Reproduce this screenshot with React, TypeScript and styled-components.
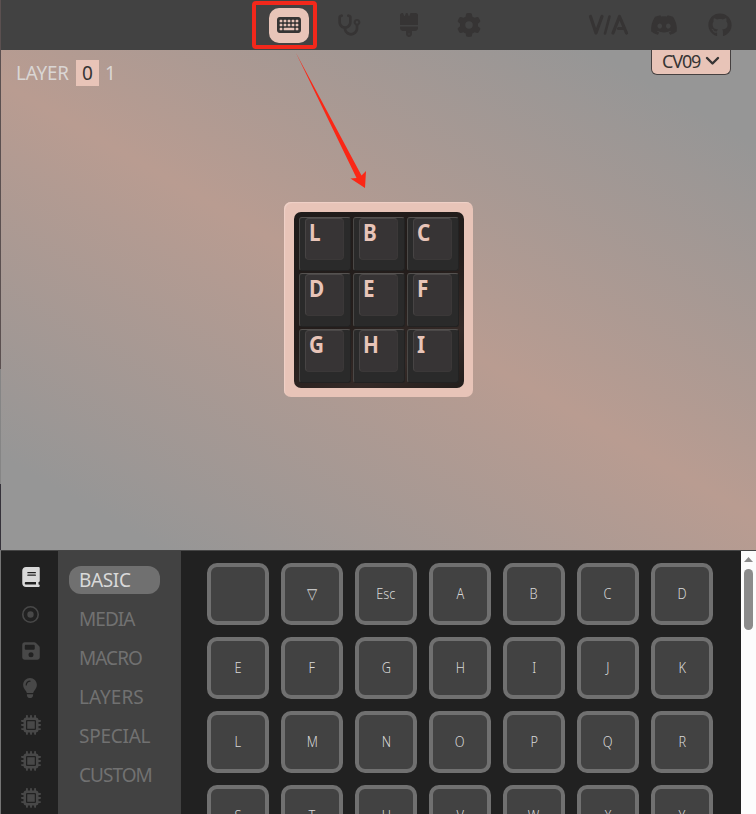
import React from 'react';
import styled, { createGlobalStyle } from 'styled-components';
import {
  FaKeyboard,
  FaStethoscope,
  FaBrush,
  FaGear,
  FaDiscord,
  FaGithub,
  FaBook,
  FaRegCircleDot,
  FaFloppyDisk,
  FaLightbulb,
  FaMicrochip,
} from 'react-icons/fa6';

const GlobalStyle = createGlobalStyle`
  * { box-sizing: border-box; }
  body {
    margin: 0;
    overflow: hidden;
    font-family: "Noto Sans", sans-serif;
  }
`;

const Window = styled.div`
  position: relative;
  width: 756px;
  height: 814px;
  overflow: hidden;
  display: flex;
  flex-direction: column;
  padding-left: 1px;
  background: linear-gradient(
    #5b5050 0 369px,
    #858585 369px 484px,
    #35323a 484px 550px,
    #757575 550px
  );
`;

const TopBar = styled.header`
  flex: none;
  height: 50px;
  display: grid;
  grid-template-columns: 258px 1fr 168px;
  background: #424242;
  color: #363434;
`;

const Nav = styled.nav`
  grid-column: 2;
  display: flex;
  align-items: center;
`;

const NavItem = styled.div<{ $active?: boolean }>`
  display: flex;
  align-items: center;
  justify-content: center;
  width: 40px;
  height: 35px;
  margin: 0 10px;
  border-radius: 10px;
  background: ${(p) => (p.$active ? '#e8c4b8' : 'transparent')};
  svg { display: block; height: 24px; width: auto; }
`;

const Links = styled.div`
  display: flex;
  align-items: center;
  svg { display: block; flex: none; }
  svg + svg { margin-left: 21px; }
  svg:last-child { margin-left: 30px; }
`;

const Canvas = styled.main`
  flex: none;
  height: 501px;
  display: flex;
  flex-direction: column;
  align-items: center;
  background: linear-gradient(30deg, #969696 10%, #b99c91 50%, #969696 90%);
  border-bottom: 1px solid #454545;
`;

const CanvasHeader = styled.div`
  align-self: stretch;
  display: flex;
  justify-content: space-between;
  align-items: flex-start;
  height: 152px;
  padding: 0 25px 0 15px;
`;

const Layers = styled.div`
  display: flex;
  align-items: center;
  margin-top: 10px;
  height: 26px;
  font-size: 19px;
  color: #dad6d4;
`;

const LayerLabel = styled.span`
  width: 60px;
  white-space: nowrap;
  letter-spacing: -0.15px;
  transform: scaleX(0.99);
  transform-origin: left;
`;

const Layer = styled.span<{ $active?: boolean }>`
  width: 23px;
  height: 26px;
  line-height: 26px;
  text-align: center;
  color: ${(p) => (p.$active ? '#363434' : 'inherit')};
  background: ${(p) => (p.$active ? '#e8c4b8' : 'transparent')};
`;

const DeviceBadge = styled.div`
  display: flex;
  align-items: center;
  gap: 5px;
  width: 80px;
  height: 25px;
  padding: 0 0 2px 10px;
  font-size: 18px;
  letter-spacing: -1.15px;
  color: #363434;
  background: #e8c4b8;
  border: 1px solid #454040;
  border-top: none;
  border-radius: 0 0 6px 6px;
  svg { flex: none; }
`;

const Case = styled.div`
  flex: none;
  width: 189px;
  height: 195px;
  padding: 10px;
  border-radius: 7px;
  background: #e8c4b8;
  box-shadow: inset 1px 1px 1px #f0d2c8;
`;

const Plate = styled.div`
  width: 170px;
  height: 176px;
  padding: 4px 0 0 5px;
  display: grid;
  grid-template-columns: repeat(3, 54px);
  grid-template-rows: repeat(3, 56px);
  border-radius: 7px;
  background: linear-gradient(150deg, #1f1b1a, #241d1b 50%, #352a27 78%, #231e1c);
`;

const Switch = styled.div`
  width: 52px;
  height: 54px;
  margin-top: 1px;
  padding-left: 5px;
  border: 1px solid #222;
  border-top-color: #555250;
  border-left-color: #4a4846;
  border-radius: 3px;
  background: #2a2a2a;
`;

const Cap = styled.div`
  width: 39px;
  height: 42px;
  padding-left: 3px;
  border: 1px solid #3b3838;
  border-top-color: #4b4848;
  border-left-color: #474444;
  border-radius: 4px;
  background: #373435;
  color: #e8c4b8;
  font-weight: 700;
  font-size: 23px;
  line-height: 26px;
`;

const Legend = styled.span`
  display: inline-block;
  transform: scaleX(0.9);
  transform-origin: left;
`;

const Panel = styled.section`
  flex: 1;
  min-height: 0;
  display: flex;
`;

const Rail = styled.div`
  flex: none;
  width: 57px;
  padding-top: 8px;
  background: #212121;
`;

const RailItem = styled.div<{ $active?: boolean }>`
  display: flex;
  align-items: center;
  justify-content: center;
  height: 36.8px;
  padding-left: 2px;
  color: ${(p) => (p.$active ? '#d9d9d9' : '#484848')};
  svg { display: block; height: 20px; width: auto; }
  &:nth-child(2) svg { height: 17px; margin-right: 1px; }
  &:nth-child(4) svg { margin-right: 2px; }
`;

const Menu = styled.div`
  flex: none;
  width: 123px;
  padding: 15px 0 0 11px;
  background: #424242;
`;

const MenuItem = styled.div<{ $active?: boolean; $tracking: number }>`
  width: 91px;
  height: 28px;
  margin-bottom: 11px;
  padding-left: 10px;
  border-radius: 12px;
  line-height: 28px;
  font-size: 19px;
  letter-spacing: ${(p) => p.$tracking}px;
  white-space: nowrap;
  color: ${(p) => (p.$active ? '#d9d9d9' : '#717171')};
  background: ${(p) => (p.$active ? '#707070' : 'transparent')};
`;

const Keycodes = styled.div`
  flex: 1;
  overflow: hidden;
  padding: 12px 0 0 26px;
  display: grid;
  grid-template-columns: repeat(7, 62px);
  grid-auto-rows: 62px;
  gap: 12px;
  background: #212121;
`;

const Keycode = styled.div`
  display: flex;
  align-items: center;
  justify-content: center;
  padding-bottom: 2px;
  border: 4px solid #707070;
  border-radius: 10px;
  background: #424242;
  color: #d9d9d9;
  font-size: 14.5px;
  line-height: 18px;
  font-weight: 300;
`;

const KeyLabel = styled.span`
  transform: scaleX(0.88);
`;

const Scrollbar = styled.div`
  flex: none;
  width: 15px;
  padding-top: 6px;
  display: flex;
  flex-direction: column;
  align-items: center;
  gap: 7px;
  background: #fcfcfc;
`;

const Thumb = styled.div`
  width: 9px;
  height: 61px;
  border-radius: 5px;
  background: #8b8b8b;
`;

const Annotation = styled.svg`
  position: absolute;
  left: 251px;
  top: 0;
  pointer-events: none;
`;

const ViaLogo = () => (
  <svg width="41" height="22" viewBox="0 0 41 22" fill="none" stroke="currentColor" strokeWidth="3.2" strokeLinecap="round" strokeLinejoin="round">
    <path d="M2.500 2.500 8 19 14 2.500" />
    <path d="M21.500 2.500 17 19.500" strokeWidth="2.6" />
    <path d="M25 19 31.500 2.500 38.500 19M30.500 14.500H35.500" />
  </svg>
);

const Chevron = () => (
  <svg width="15" height="10" viewBox="0 0 15 10" fill="none" stroke="currentColor" strokeWidth="2.4" strokeLinecap="round" strokeLinejoin="round">
    <path d="M2 2 7.500 7.500 13 2" />
  </svg>
);

const SWITCHES = ['L', 'B', 'C', 'D', 'E', 'F', 'G', 'H', 'I'];
const MENU: [string, number][] = [
  ['BASIC', -0.35],
  ['MEDIA', -0.95],
  ['MACRO', -0.95],
  ['LAYERS', 0.05],
  ['SPECIAL', -0.25],
  ['CUSTOM', -0.95],
];
const KEYCODES = ['', '▽', 'Esc', ...'ABCDEFGHIJKLMNOPQRSTUVWXY'.split('')];
const RAIL = [FaBook, FaRegCircleDot, FaFloppyDisk, FaLightbulb, FaMicrochip, FaMicrochip, FaMicrochip];

export default function App() {
  return (
    <Window>
      <GlobalStyle />
      <TopBar>
        <Nav>
          <NavItem $active><FaKeyboard /></NavItem>
          <NavItem><FaStethoscope /></NavItem>
          <NavItem><FaBrush /></NavItem>
          <NavItem><FaGear /></NavItem>
        </Nav>
        <Links>
          <ViaLogo />
          <FaDiscord size={28} />
          <FaGithub size={24} />
        </Links>
      </TopBar>
      <Canvas>
        <CanvasHeader>
          <Layers>
            <LayerLabel>LAYER</LayerLabel>
            <Layer $active>0</Layer>
            <Layer>1</Layer>
          </Layers>
          <DeviceBadge>
            CV09
            <Chevron />
          </DeviceBadge>
        </CanvasHeader>
        <Case>
          <Plate>
            {SWITCHES.map((label) => (
              <Switch key={label}>
                <Cap><Legend>{label}</Legend></Cap>
              </Switch>
            ))}
          </Plate>
        </Case>
      </Canvas>
      <Panel>
        <Rail>
          {RAIL.map((Icon, i) => (
            <RailItem key={i} $active={i === 0}><Icon /></RailItem>
          ))}
        </Rail>
        <Menu>
          {MENU.map(([label, tracking], i) => (
            <MenuItem key={label} $active={i === 0} $tracking={tracking}>{label}</MenuItem>
          ))}
        </Menu>
        <Keycodes>
          {KEYCODES.map((label, i) => (
            <Keycode key={i}><KeyLabel>{label}</KeyLabel></Keycode>
          ))}
        </Keycodes>
        <Scrollbar>
          <svg width="9" height="5" viewBox="0 0 9 5"><path d="M4.5 0 9 5H0z" fill="#8b8b8b" /></svg>
          <Thumb />
        </Scrollbar>
      </Panel>
      <Annotation width="130" height="200" viewBox="251 0 130 200">
        <rect x="254" y="3" width="61" height="44" rx="2" fill="none" stroke="#f2281b" strokeWidth="4" />
        <path d="M296 53 361.5 175.5 366 171 365 188 350.5 178.5 356.500 178Z" fill="#fb2716" />
      </Annotation>
    </Window>
  );
}
